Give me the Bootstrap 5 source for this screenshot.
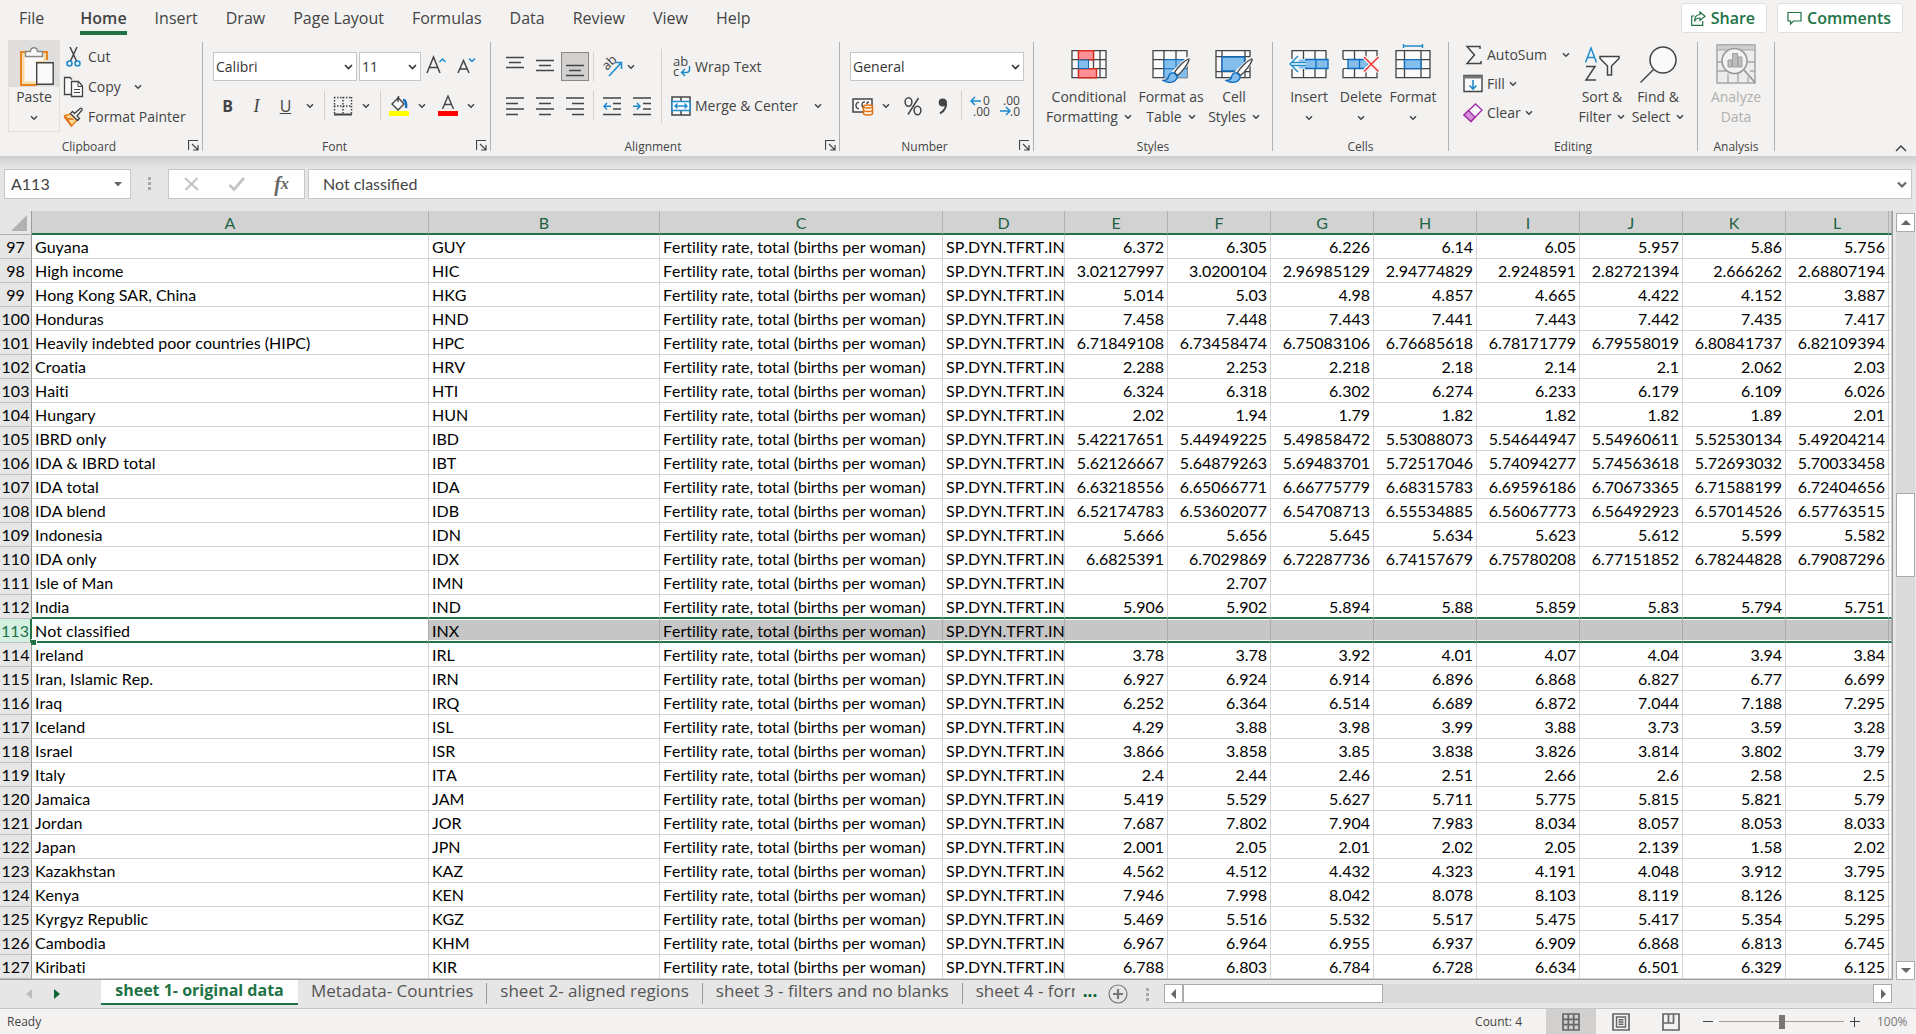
<!DOCTYPE html>
<html lang="en">
<head>
<meta charset="utf-8">
<meta name="viewport" content="width=device-width, initial-scale=1">
<title>Workbook</title>
<link rel="stylesheet" href="https://cdn.jsdelivr.net/npm/bootstrap@5.3.0/dist/css/bootstrap.min.css">
<style>
:root{--ink:#444;--green:#217346;--blue:#1e8bcd;--line:#c6c6c6}
body{font-family:"Open Sans","Noto Sans",sans-serif;font-size:14px;line-height:20px;color:var(--ink);background:#e6e6e6}
svg{display:block;flex:none;fill:none;stroke:var(--ink);overflow:visible}
.btn{--bs-btn-padding-x:0;--bs-btn-padding-y:0;--bs-btn-border-width:0;--bs-btn-border-radius:0;--bs-btn-font-size:14px;--bs-btn-color:#444;--bs-btn-line-height:20px;white-space:nowrap}
.chrome{background:#f3f2f1}
/* ribbon tabs */
.tabstrip{height:36px}
.tabstrip .nav-link{font-size:16px;line-height:24px;padding:6px 0 0;margin:0 14px;color:var(--ink)}
.tabstrip .nav-item:first-child .nav-link{margin:0 22px 0 19px}
.tabstrip .nav-link.active{font-weight:600;border-bottom:4px solid var(--green);padding-bottom:1px}
.corner-btn{height:30px;background:#fff;border:1px solid #e1dfdd;border-radius:3px;color:var(--green);font-weight:600;font-size:16px;gap:5px;padding:0 11px 0 9px}
.corner-btn svg{stroke:var(--green)}
/* ribbon */
.ribbon{height:120px;padding-top:4px}
.rgroup{flex:none;display:flex;flex-direction:column}
.rbody{height:92px;display:flex}
.rfoot{height:24px;padding-top:5px;display:flex;font-size:12px;line-height:19px;text-align:center}
.rfoot .launch{width:24px;padding:3px 0 0 10px}
.rsep{flex:none;width:1px;background:#b1b1b1;margin:2px 0 5px}
.isep{flex:none;width:1px;background:#d2d0ce;height:29px}
.tallsep{flex:none;width:1px;background:#d2d0ce;height:74px;margin:9px 9px 0 4px}
.gclip{width:202px}.gfont{width:287px}.galign{width:348px}.gnum{width:193px}
.gstyle{width:238px}.gcell{width:175px}.gedit{width:248px}.ganal{width:76px}
.rows{display:flex;flex-direction:column;gap:10px;padding-top:12px}
.rows>div{display:flex;height:29px;align-items:center}
.b26,.b29,.b30,.cv{height:29px;display:flex;align-items:center;justify-content:center}
.b26{width:26px}.b29{width:29px}.b30{width:30px}.cv{width:19px}
.glyph{font-size:16px}
.glyph-i{font-family:"Liberation Serif",serif;font-size:18px}
.pressed,.pressed:hover{background:#d2d0ce;border:1px solid #8a8886;margin:0 1px;width:28px}
.lbl{height:30px;display:flex;align-items:center;gap:5px}
.slim{height:29px;gap:4px}
.big{display:flex;flex-direction:column;align-items:center;padding-top:4px;height:92px}
.big .pic{height:43px}
.big .ln{display:flex;gap:6px;align-items:center;height:20px}
.paste{width:52px;height:92px;border:1px solid #e1dfdd;display:flex;flex-direction:column;align-items:center}
.paste .pic{background:#dfdedd;align-self:stretch;height:46px;display:flex;justify-content:center;padding:5px 0 0 6px}
.cmb{height:29px;border:1px solid var(--line);border-radius:0;padding:0 20px 0 2px;font-size:14px;line-height:20px;color:#333;background-position:right 3px center;background-size:9px 6px;background-image:url("data:image/svg+xml,%3csvg xmlns='http://www.w3.org/2000/svg' viewBox='0 0 9 6'%3e%3cpath fill='none' stroke='%23333' stroke-width='1.6' d='M1 1l3.5 3.5L8 1'/%3e%3c/svg%3e")}
.c144{width:144px}.c62{width:62px;margin-left:2px}.c174{width:174px}
/* formula bar */
.fbar{height:55px;padding:13px 4px 0;background:linear-gradient(#cfcfcf,#e6e6e6 12px)}
.fbox{height:30px;background:#fff;border:1px solid var(--line);display:flex;align-items:center}
.fbox input{border:0;outline:0;background:transparent;min-width:0;flex:1;font:16px/22px Lato,sans-serif;color:var(--ink);padding:0}
.nbox{width:127px;padding:0 8px 0 6px}
.fxbox{width:137px}.fxbox .btn{width:45px;display:flex;justify-content:center}
.fxl{font:italic 700 20px/22px "Liberation Serif",serif;color:#666}
.fxl small{font-size:16px}
/* grid */
.gridwrap{min-height:0;padding-right:1px}
.sheet{background:#fff;border-right:1px solid #9b9b9b;border-bottom:1px solid #9b9b9b;min-width:0}
.cells{table-layout:fixed;width:100%;border-collapse:separate;border-spacing:0;font:16px/22px Lato,sans-serif;color:#000;font-variant-ligatures:none;font-kerning:none}
.cells td,.cells th{height:24px;padding:0 3px;border:solid #d4d4d4;border-width:0 1px 1px 0;white-space:nowrap;overflow:hidden;font-weight:400}
.cells thead th,.cells .above td,.cells .picked td{border-bottom:2px solid var(--green);line-height:20px;padding-top:2px}
.cells thead th{background:#d2d2d2;border-right-color:#b1b1b1;color:#1e6345;text-align:center}
.cells thead th:first-child{background:#e6e6e6;border-bottom:1px solid #b1b1b1;border-right-color:#9b9b9b;padding:0}
.cells tbody th{background:#e6e6e6;border-color:#c0c0c0;border-right-color:#9b9b9b;padding:0;text-align:center}
.cells td.num{text-align:right}
.cells .picked td{border-right-color:#ababab;background:linear-gradient(#c6c6c6,#c6c6c6) center/100% calc(100% - 2px) no-repeat}
.cells .picked th{background:#d3f0e0;color:var(--green);border-right:2px solid var(--green)}
.cells .picked td:nth-child(2){background:#fff;position:relative;overflow:visible}
.cells .picked td:nth-child(2)::after{content:"";position:absolute;left:-1px;bottom:-4px;width:6px;height:6px;background:var(--green);border:solid #fff;border-width:1px 1px 0 0}
.vbar{width:19px;margin-left:3px;padding-top:2px;display:flex;flex-direction:column}
.sbtn{width:19px;height:19px;background:#fff;border:1px solid #ababab;display:flex;align-items:center;justify-content:center;flex:none}
.sbtn svg,.tri{fill:#666;stroke:none}
.track{background:#dadada;flex:1;display:flex}
.vthumb{width:19px;height:84px;background:#fff;border:1px solid #ababab}
.hthumb{width:200px;height:19px;background:#fff;border:1px solid #ababab}
/* sheet tabs */
.shtabs{height:29px;border-bottom:1px solid #c6c6c6;padding-right:24px}
.shtabs .nav-link{font-size:17px;line-height:20px;height:25px;color:#555;padding:0;white-space:nowrap}
.shtabs .sheettab{padding:0 13px;border-right:1px solid #9b9b9b;margin-top:3px;height:21px;display:flex;align-items:center}
.shtabs .sheettab .nav-link{line-height:16px;height:21px}
.shtabs .current{width:197px;margin-left:101px;background:#fff;color:var(--green);font-weight:700;font-size:16px;text-align:center;border-bottom:2px solid var(--green)}
.arrows{width:101px;margin-right:-101px;height:28px;gap:22px;padding-left:26px}
.cut-off{width:99px;overflow:hidden}
.more{color:#0e6535;font-size:17px;line-height:16px;height:21px}
.dots3{display:flex;flex-direction:column;gap:2px}
.dots3 i{width:3px;height:3px;background:#a8a8a8}
.hbar{flex:1;display:flex;margin:4px 0 0 15px}
/* status bar */
.status{height:25px;font-size:12px;line-height:25px}
.status .vb{width:50px;height:25px;display:flex;align-items:center;justify-content:center}
.status .on{background:#d2d0ce}
.zoomer{appearance:none;width:125px;height:15px;background:linear-gradient(#a19f9d,#a19f9d) center/100% 1px no-repeat;margin:0 6px}
.zoomer::-webkit-slider-thumb{appearance:none;width:6px;height:14px;background:#797775}
.pct{width:56px;padding-left:17px;color:#777}
</style>
<script src="https://cdn.jsdelivr.net/npm/bootstrap@5.3.0/dist/js/bootstrap.bundle.min.js"></script>
</head>
<body class="d-flex flex-column vh-100 overflow-hidden">
<svg width="0" height="0" class="position-absolute" aria-hidden="true">
  <symbol id="chev" viewBox="0 0 8 6"><path d="M1 1.200l3 3 3-3" stroke-width="1.500"/></symbol>
  <symbol id="launch" viewBox="0 0 11 11"><path d="M.5 10V.5H10M4 4l5.500 5.500M10 5v5H5" stroke-width="1.200"/></symbol>
  <symbol id="brush" viewBox="0 0 28 26"><path d="M26.500 1C22 3 15 10 12.500 14.500l3 3C20 14 26 6 27 2c.2-.9 0-1.200-.5-1z" fill="#fff" stroke-width="1.300"/><path d="M12 15c-3-.5-5 1-5.500 4-.4 2-2 3.500-5.500 3.500 3 2 8 2.500 11 .8 2.500-1.500 3.500-3.500 3-5.300z" fill="#83beec" stroke="#0f6cbd" stroke-width="1.400"/></symbol>
</svg>

<header class="chrome">
  <div class="tabstrip d-flex">
    <ul class="nav flex-nowrap flex-grow-1">
      <li class="nav-item"><a class="nav-link" href="#">File</a></li>
      <li class="nav-item"><a class="nav-link active" href="#">Home</a></li>
      <li class="nav-item"><a class="nav-link" href="#">Insert</a></li>
      <li class="nav-item"><a class="nav-link" href="#">Draw</a></li>
      <li class="nav-item"><a class="nav-link" href="#">Page Layout</a></li>
      <li class="nav-item"><a class="nav-link" href="#">Formulas</a></li>
      <li class="nav-item"><a class="nav-link" href="#">Data</a></li>
      <li class="nav-item"><a class="nav-link" href="#">Review</a></li>
      <li class="nav-item"><a class="nav-link" href="#">View</a></li>
      <li class="nav-item"><a class="nav-link" href="#">Help</a></li>
    </ul>
    <div class="d-flex" style="gap:10px;padding:3px 13px 0 0">
      <button class="btn corner-btn d-flex align-items-center" type="button"><svg width="15" height="15"><path d="M3.500 5H.7v9.300h11V10M9 1l5 4.200-5 4.300V7C6.500 7 4.500 8 3.500 10.500 3.500 6 6 3.700 9 3.500z" stroke-width="1.200"/></svg>Share</button>
      <button class="btn corner-btn d-flex align-items-center" type="button"><svg width="15" height="15"><path d="M1 1.500h13v8.500H6.500L3.500 13v-3H1z" stroke-width="1.200"/></svg>Comments</button>
    </div>
  </div>

  <div class="ribbon d-flex">
    <section class="rgroup gclip">
      <div class="rbody ps-2">
        <button class="btn paste" type="button"><span class="pic"><svg width="36" height="40"><path d="M8 6H2v33h16M22 6h6v8" stroke="#e8831d" stroke-width="2"/><path d="M4.500 8h21v8H18v20.500H4.500z" fill="#fafafa" stroke="#fbdc9c" stroke-width="2"/><path d="M6.500 10.500V5.500h5c0-2.500 1.500-3.800 3.500-3.800s3.500 1.300 3.500 3.800h5v5z" fill="#fafafa" stroke="#888" stroke-width="1.400"/><path d="M17.700 16.700h16.500v21.500H17.700z" fill="#fafafa" stroke-width="1.400"/></svg></span><span class="ln">Paste</span><svg class="mt-2" width="8" height="6"><use href="#chev"/></svg></button>
        <div style="padding:2px 0 0 3px">
          <button class="btn lbl" type="button"><svg width="20" height="22"><path d="M7 1l6.500 14M14 1L7.500 15" stroke-width="1.500"/><circle cx="6.500" cy="17.500" r="2.500" stroke="#1e8bcd" stroke-width="1.600"/><circle cx="14.500" cy="17.500" r="2.500" stroke="#1e8bcd" stroke-width="1.600"/></svg>Cut</button>
          <button class="btn lbl" type="button"><svg width="20" height="22"><path d="M8 18.500H1.500V1.500H7l2 2" fill="#fafafa" stroke-width="1.300"/><path d="M8.500 5.500h7l4 4.500v10.500h-11z" fill="#fafafa" stroke-width="1.300"/><path d="M15 6v4.500h4M11 13.500h6M11 16.500h6" stroke-width="1"/></svg>Copy<svg class="ms-2" width="8" height="6"><use href="#chev"/></svg></button>
          <button class="btn lbl" type="button"><svg width="20" height="22"><path d="M2 9.500l6-1.500 6 6-5.500 6z" fill="#fbdc9c" stroke="#e8831d" stroke-width="1.500"/><path d="M1 10.500l7.500 9.500M4.500 12.500l6 1" stroke="#e07010" stroke-width="1.500"/><path d="M7.500 7.500l7 7 2-2-2.500-2.500 5-6c.8-1-.8-2.500-1.800-1.600L11.500 7.500 9.500 5.500z" fill="#fafafa" stroke-width="1.300"/></svg>Format Painter</button>
        </div>
      </div>
      <div class="rfoot"><span class="flex-grow-1">Clipboard</span><span class="launch"><svg width="11" height="11"><use href="#launch"/></svg></span></div>
    </section>
    <div class="rsep"></div>

    <section class="rgroup gfont">
      <div class="rbody" style="padding-left:10px"><div class="rows">
        <div>
          <select class="form-select cmb c144" aria-label="Font"><option>Calibri</option></select>
          <select class="form-select cmb c62" aria-label="Font size"><option>11</option></select>
          <button class="btn b30" type="button" aria-label="Increase font size"><svg width="20" height="20"><path d="M1 16L7.500 0 14 16M3.500 10.500h8" stroke-width="1.500"/><path d="M13.500 5L16.500 2l3 3" stroke="#1e8bcd" stroke-width="1.500"/></svg></button>
          <button class="btn b30" type="button" aria-label="Decrease font size"><svg width="20" height="20"><path d="M2 16L7.500 3.500 13 16M4 12h7" stroke-width="1.500"/><path d="M13 1.500l3 3 3-3" stroke="#1e8bcd" stroke-width="1.500"/></svg></button>
        </div>
        <div>
          <button class="btn b29 glyph fw-bold" type="button">B</button>
          <button class="btn b29 glyph-i fst-italic" type="button">I</button>
          <button class="btn b29 glyph text-decoration-underline" type="button">U</button>
          <button class="btn cv" type="button" aria-label="Underline styles"><svg width="8" height="6"><use href="#chev"/></svg></button>
          <div class="isep" style="margin:0 5px"></div>
          <button class="btn b26" type="button" aria-label="Borders"><svg width="20" height="20"><path d="M1 1.500h18M1 10h18M1.500 1v17M10 1v17M18.500 1v17" stroke-width="1.500" stroke-dasharray="1.500 1.500"/><path d="M1 18.500h18" stroke-width="2"/></svg></button>
          <button class="btn cv" type="button" aria-label="Border styles"><svg width="8" height="6"><use href="#chev"/></svg></button>
          <div class="isep" style="margin:0 5px"></div>
          <button class="btn b26" type="button" aria-label="Fill colour"><svg width="20" height="21"><path d="M9 2.500l6 6.500-6 6-6-6 6.500-6.500V1M9 2v5" fill="#fafafa" stroke-width="1.400"/><path d="M14 5c3 0 3.500 4 3 8" stroke="#0f6cbd" stroke-width="2.400"/><path d="M0 16h20v5H0z" fill="#ff0" stroke="none"/></svg></button>
          <button class="btn cv" type="button" aria-label="Fill colours"><svg width="8" height="6"><use href="#chev"/></svg></button>
          <button class="btn b26 ms-1" type="button" aria-label="Font colour"><svg width="20" height="21"><path d="M4.500 14L10 1l5.500 13M6.500 9.500h7" stroke-width="1.400"/><path d="M0 16h20v5H0z" fill="red" stroke="none"/></svg></button>
          <button class="btn cv" type="button" aria-label="Font colours"><svg width="8" height="6"><use href="#chev"/></svg></button>
        </div>
      </div></div>
      <div class="rfoot"><span class="flex-grow-1">Font</span><span class="launch"><svg width="11" height="11"><use href="#launch"/></svg></span></div>
    </section>
    <div class="rsep"></div>

    <section class="rgroup galign">
      <div class="rbody" style="padding-left:9px">
        <div class="rows">
          <div>
            <button class="btn b30" type="button" aria-label="Top align"><svg width="18" height="22"><path d="M0 1.500h18M3 6.500h12M0 11.500h18" stroke-width="1.500"/></svg></button>
            <button class="btn b30" type="button" aria-label="Middle align"><svg width="18" height="22"><path d="M0 4.500h18M3 9.500h12M0 14.500h18" stroke-width="1.500"/></svg></button>
            <button class="btn b30 pressed" type="button" aria-label="Bottom align"><svg width="18" height="22"><path d="M0 9.500h18M3 14.500h12M0 19.500h18" stroke-width="1.500"/></svg></button>
            <div class="isep" style="margin:0 3px"></div>
            <button class="btn d-flex align-items-center" type="button" aria-label="Orientation" style="gap:5px;padding-left:5px"><svg width="20" height="21"><text transform="translate(5 15) rotate(-45)" font-size="13" fill="#444" stroke="none">ab</text><path d="M7 20L19 7M13 6.500h6.500V13" stroke="#1e8bcd" stroke-width="1.600"/></svg><svg width="8" height="6"><use href="#chev"/></svg></button>
          </div>
          <div>
            <button class="btn b30" type="button" aria-label="Align left"><svg width="18" height="20"><path d="M0 2h18M0 7.500h12M0 13h18M0 18.500h12" stroke-width="1.500"/></svg></button>
            <button class="btn b30" type="button" aria-label="Centre"><svg width="18" height="20"><path d="M0 2h18M3 7.500h12M0 13h18M3 18.500h12" stroke-width="1.500"/></svg></button>
            <button class="btn b30" type="button" aria-label="Align right"><svg width="18" height="20"><path d="M0 2h18M6 7.500h12M0 13h18M6 18.500h12" stroke-width="1.500"/></svg></button>
            <div class="isep" style="margin:0 3px"></div>
            <button class="btn b30" type="button" aria-label="Decrease indent"><svg width="18" height="20"><path d="M0 2h18M10 7.500h8M10 13h8M0 18.500h18" stroke-width="1.500"/><path d="M8 10.300H1M4 7l-3 3.300 3 3.300" stroke="#1e8bcd" stroke-width="1.500"/></svg></button>
            <button class="btn b30" type="button" aria-label="Increase indent"><svg width="18" height="20"><path d="M0 2h18M10 7.500h8M10 13h8M0 18.500h18" stroke-width="1.500"/><path d="M0 10.300h7M4 7l3 3.300-3 3.300" stroke="#1e8bcd" stroke-width="1.500"/></svg></button>
          </div>
        </div>
        <div class="tallsep"></div>
        <div class="rows">
          <div><button class="btn lbl slim" type="button"><svg width="20" height="22"><text x="2" y="10" font-size="13" fill="#444" stroke="none">ab</text><text x="2" y="20" font-size="13" fill="#444" stroke="none">c</text><path d="M18.500 10v3.500c0 2-1 3-3 3H11M14 13l-3.500 3.500L14 20" stroke="#1e8bcd" stroke-width="1.500"/></svg>Wrap Text</button></div>
          <div><button class="btn lbl slim" type="button"><svg width="20" height="20"><path d="M1 1h18v18H1zM10 1v4M10 15v4" fill="#fafafa" stroke-width="1.500"/><path d="M1 5.500h18v9H1z" fill="#fff" stroke="#1e8bcd" stroke-width="1.500"/><path d="M4 10h12M6.500 7.500L4 10l2.500 2.500M13.500 7.500L16 10l-2.500 2.500" stroke="#1e8bcd" stroke-width="1.400"/></svg>Merge &amp; Center<svg style="margin-left:12px" width="8" height="6"><use href="#chev"/></svg></button></div>
        </div>
      </div>
      <div class="rfoot"><span class="flex-grow-1">Alignment</span><span class="launch"><svg width="11" height="11"><use href="#launch"/></svg></span></div>
    </section>
    <div class="rsep"></div>

    <section class="rgroup gnum">
      <div class="rbody" style="padding-left:10px"><div class="rows">
        <div><select class="form-select cmb c174" aria-label="Number format"><option>General</option></select></div>
        <div>
          <button class="btn b26" type="button" aria-label="Currency"><svg width="22" height="21"><path d="M1 4h19v13H1z" fill="#fafafa" stroke-width="1.500"/><path d="M7 7.500c-4-1-4 7 0 6M13 7c-4-1-4 7 0 6M17 7c-2 0-2 1-2 2" stroke-width="1.400"/><path d="M11.500 11.500v7c0 2 9 2 9 0v-7c0-2-9-2-9 0z" fill="#fff3e0" stroke="#e07010" stroke-width="1.500"/><path d="M11.500 11.500c0 2 9 2 9 0M11.500 15c0 2 9 2 9 0" stroke="#e07010" stroke-width="1.300"/></svg></button>
          <button class="btn cv" type="button" aria-label="Currencies"><svg width="8" height="6"><use href="#chev"/></svg></button>
          <button class="btn b30" type="button" aria-label="Percent" style="margin-left:3px"><svg width="18" height="20"><path d="M14.500 2L4 18.500" stroke-width="1.500"/><ellipse cx="4.500" cy="6" rx="3.400" ry="4.200" stroke-width="1.500"/><ellipse cx="13.500" cy="14.500" rx="3.400" ry="4.200" stroke-width="1.500"/></svg></button>
          <button class="btn b30" type="button" aria-label="Comma"><svg width="10" height="20"><circle cx="4.700" cy="6.500" r="4" fill="#444" stroke="none"/><path d="M7.500 5c1.500 5 0 9-5.500 12.500" stroke-width="2"/></svg></button>
          <div class="isep" style="margin:0 3px"></div>
          <button class="btn b30" type="button" aria-label="Increase decimal"><svg width="20" height="22"><text x="13" y="10" font-size="12" fill="#444" stroke="none">0</text><text x="3" y="21" font-size="12" fill="#444" stroke="none">.00</text><path d="M11 6H1M5 2L1 6l4 4" stroke="#1e8bcd" stroke-width="1.500"/></svg></button>
          <button class="btn b30" type="button" aria-label="Decrease decimal"><svg width="20" height="22"><text x="3" y="10" font-size="12" fill="#444" stroke="none">.00</text><text x="10" y="21" font-size="12" fill="#444" stroke="none">.0</text><path d="M0 16h10M6 12l4 4-4 4" stroke="#1e8bcd" stroke-width="1.500"/></svg></button>
        </div>
      </div></div>
      <div class="rfoot"><span class="flex-grow-1">Number</span><span class="launch"><svg width="11" height="11"><use href="#launch"/></svg></span></div>
    </section>
    <div class="rsep"></div>

    <section class="rgroup gstyle">
      <div class="rbody" style="padding-left:10px">
        <button class="btn big" type="button" style="width:90px"><span class="pic"><svg width="36" height="40"><path d="M1 6.700h34v27H1zM1 15.700h34M1 24.700h34M7.500 7v27M16 7v27M22.500 7v27M29 7v27" fill="#fafafa" stroke-width="1.300"/><path d="M7.500 6.700h15v9h-15zM7.500 24.700h18v9h-18z" fill="#ff9196" stroke="#d92c20" stroke-width="1.400"/><path d="M7.500 16h10v8.500h-10z" fill="#83beec" stroke="#0f6cbd"/></svg></span><span class="ln">Conditional</span><span class="ln">Formatting<svg width="8" height="6"><use href="#chev"/></svg></span></button>
        <button class="btn big" type="button" style="width:74px"><span class="pic"><svg width="38" height="42"><path d="M1 6.700h34v27H1zM1 15.700h34M1 24.700h34M12 7v27M24 7v27" fill="#fafafa" stroke-width="1.300"/><path d="M12 15.700h23v18H12z" fill="#83beec" stroke="none"/><path d="M12 33V15.700h20M24 16v9M12 24.700h23" stroke="#0f6cbd"/><path d="M38 15L22 30" stroke="#f3f2f1" stroke-width="7"/><use href="#brush" x="10" y="14" width="28" height="26"/></svg></span><span class="ln">Format as</span><span class="ln">Table<svg width="8" height="6"><use href="#chev"/></svg></span></button>
        <button class="btn big" type="button" style="width:52px"><span class="pic"><svg width="38" height="42"><path d="M1 6.700h34v27H1zM1 12.700h34M1 27.700h34M7 7v27M30 7v27" fill="#fafafa" stroke-width="1.300"/><path d="M7 13h22.500v14H7z" fill="#83beec" stroke="#0f6cbd" stroke-width="1.300"/><path d="M38 15L22 30" stroke="#f3f2f1" stroke-width="7"/><use href="#brush" x="10" y="14" width="28" height="26"/></svg></span><span class="ln">Cell</span><span class="ln">Styles<svg width="8" height="6"><use href="#chev"/></svg></span></button>
      </div>
      <div class="rfoot"><span class="flex-grow-1">Styles</span></div>
    </section>
    <div class="rsep"></div>

    <section class="rgroup gcell">
      <div class="rbody" style="padding-left:10px">
        <button class="btn big" type="button" style="width:52px"><span class="pic"><svg width="40" height="40"><path d="M3 6.700h34v27H3zM14.500 7v27M26 7v27" fill="#fafafa" stroke-width="1.300"/><path d="M0 15h20v10H0z" fill="#fafafa" stroke="none"/><path d="M10 15.500h29v9H10z" fill="#83beec" stroke="none"/><path d="M16 15.500h23v9H16M27 15.500v9" stroke="#0f6cbd" stroke-width="1.300"/><path d="M17 20H2" stroke="#fafafa" stroke-width="5"/><path d="M9 12l-8 8 8 8M3 18.500h14M3 21.500h14" stroke="#1e8bcd" stroke-width="1.400"/></svg></span><span class="ln">Insert</span><svg class="mt-2" width="8" height="6"><use href="#chev"/></svg></button>
        <button class="btn big" type="button" style="width:52px"><span class="pic"><svg width="38" height="40"><path d="M1 6.700h34v27H1zM12.500 7v27M24 7v27" fill="#fafafa" stroke-width="1.300"/><path d="M0 15h37v10H0z" fill="#fafafa" stroke="none"/><path d="M1 15.500h5M1 24.500h5"/><path d="M6 15.500h20v9H6zM17.500 15.500v9" fill="#83beec" stroke="#0f6cbd" stroke-width="1.300"/><path d="M22 13l14.500 14.500M36.500 13L22 27.500" stroke="#f3f2f1" stroke-width="4"/><path d="M22 13l14.500 14.500M36.500 13L22 27.500" stroke="#f0403c" stroke-width="1.600"/></svg></span><span class="ln">Delete</span><svg class="mt-2" width="8" height="6"><use href="#chev"/></svg></button>
        <button class="btn big" type="button" style="width:52px"><span class="pic"><svg width="36" height="40"><path d="M1 6.700h34v27H1zM1 15.700h34M1 24.700h34M9.500 7v27M26 7v27" fill="#fafafa" stroke-width="1.300"/><path d="M9.500 15.700H26v9H9.500z" fill="#83beec" stroke="#0f6cbd" stroke-width="1.300"/><path d="M8.500 0v4M27.500 0v4M8.500 2h19" stroke="#1e8bcd" stroke-width="1.400"/></svg></span><span class="ln">Format</span><svg class="mt-2" width="8" height="6"><use href="#chev"/></svg></button>
      </div>
      <div class="rfoot"><span class="flex-grow-1">Cells</span></div>
    </section>
    <div class="rsep"></div>

    <section class="rgroup gedit">
      <div class="rbody" style="padding-left:14px">
        <div style="width:110px">
          <button class="btn lbl slim" type="button"><svg width="20" height="20"><path d="M17 4V1.500H4l7.500 8.500L4 18.500h14V16" stroke-width="1.500"/></svg>AutoSum<svg style="margin-left:11px" width="8" height="6"><use href="#chev"/></svg></button>
          <button class="btn lbl slim" type="button"><svg width="20" height="20"><path d="M1 1.500h18v16H1z" fill="#fafafa" stroke-width="1.400"/><path d="M1 3h18" stroke="#777" stroke-width="3"/><path d="M10 6v9M6.500 11.500L10 15l3.500-3.500" stroke="#1e8bcd" stroke-width="1.600"/></svg>Fill<svg width="8" height="6"><use href="#chev"/></svg></button>
          <button class="btn lbl slim" type="button"><svg width="20" height="20"><path d="M1 12L12.500 1l6.500 6L8 18.500z" fill="#fafafa" stroke="#a02da5" stroke-width="1.300"/><path d="M1 12l4.500-4.500L12 14l-4 4.500z" fill="#d690d9" stroke="#a02da5" stroke-width="1.300"/></svg>Clear<svg width="8" height="6"><use href="#chev"/></svg></button>
        </div>
        <button class="btn big" type="button" style="width:58px"><span class="pic"><svg width="36" height="40"><path d="M1.500 18.500L7 4l5.500 14.500M3.500 13.500h7" stroke="#1e8bcd" stroke-width="1.500"/><path d="M2 22.500h9L2 36h10" stroke-width="1.500"/><path d="M16 12.500h19v2L27.500 22v9h-4v-9L16 14.500z" fill="#fafafa" stroke-width="1.500"/></svg></span><span class="ln">Sort &amp;</span><span class="ln">Filter<svg width="8" height="6"><use href="#chev"/></svg></span></button>
        <button class="btn big" type="button" style="width:54px"><span class="pic"><svg width="38" height="40"><circle cx="24" cy="16" r="13" fill="#fafafa" stroke-width="1.500"/><path d="M14.500 25.500L1.500 38.500" stroke-width="1.500"/></svg></span><span class="ln">Find &amp;</span><span class="ln">Select<svg width="8" height="6"><use href="#chev"/></svg></span></button>
      </div>
      <div class="rfoot"><span class="flex-grow-1">Editing</span></div>
    </section>
    <div class="rsep"></div>

    <section class="rgroup ganal">
      <div class="rbody">
        <button class="btn big" type="button" style="width:76px;color:#b1afad"><span class="pic"><svg width="40" height="40" style="stroke:#a6a6a6"><path d="M1 1h38v38H1z" fill="#ececec" stroke-width="1.500"/><path d="M1 1h38v5H1z" fill="#d0d0d0"/><path d="M1 18h6M1 27h9M31 18h8M34 27h5M12 30v9M22 30v9M32 33v6" stroke-width="1.300"/><circle cx="18.500" cy="17" r="12.500" fill="#f3f2f1" stroke="#999" stroke-width="1.600"/><path d="M28 26l11 12.500" stroke="#999" stroke-width="1.800"/><path d="M12 16h4v7h-4zM16.500 9.500h5V23h-5zM22 13h4v10h-4z" fill="#bdbdbd" stroke="#a0a0a0"/></svg></span><span class="ln">Analyze</span><span class="ln">Data</span></button>
      </div>
      <div class="rfoot"><span class="flex-grow-1">Analysis</span></div>
    </section>
    <div class="rsep"></div>
    <button class="btn ms-auto align-self-end" type="button" aria-label="Collapse the ribbon" style="padding:0 9px 4px 0"><svg width="12" height="8"><path d="M1 7l5-5 5 5" stroke-width="1.500"/></svg></button>
  </div>
</header>

<div class="fbar d-flex">
  <div class="fbox nbox"><input aria-label="Name box" value="A113"><svg class="tri" width="8" height="5"><path d="M0 0h8L4 4.500z"/></svg></div>
  <div class="dots3 justify-content-center" style="height:28px;margin:0 17px 0 17px"><i></i><i></i><i></i></div>
  <div class="fbox fxbox">
    <button class="btn" type="button" aria-label="Cancel"><svg width="16" height="14"><path d="M1 1l13 12M13.500 1l-12 12" stroke="#c4c4c4" stroke-width="2.200"/></svg></button>
    <button class="btn" type="button" aria-label="Enter"><svg width="17" height="14"><path d="M1.500 8l4.500 4.500L16 1" stroke="#c4c4c4" stroke-width="2.800"/></svg></button>
    <button class="btn fxl" type="button">f<small>x</small></button>
  </div>
  <div class="fbox flex-grow-1" style="margin-left:3px;padding:0 4px 0 14px"><input aria-label="Formula bar" value="Not classified"><svg width="10" height="7"><path d="M1 1.500l4 4 4-4" stroke="#666" stroke-width="2.200"/></svg></div>
</div>

<main class="gridwrap d-flex flex-grow-1">
  <div class="sheet flex-grow-1 overflow-hidden">
    <table class="cells">
      <colgroup><col style="width:32px"><col style="width:397px"><col style="width:231px"><col style="width:283px"><col style="width:122px"><col style="width:103px"><col style="width:103px"><col style="width:103px"><col style="width:103px"><col style="width:103px"><col style="width:103px"><col style="width:103px"><col style="width:103px"><col></colgroup>
      <thead><tr><th><svg class="ms-auto" width="20" height="18" style="fill:#b1b1b1;stroke:none"><path d="M16 1v16H0z"/></svg></th><th>A</th><th>B</th><th>C</th><th>D</th><th>E</th><th>F</th><th>G</th><th>H</th><th>I</th><th>J</th><th>K</th><th>L</th><th></th></tr></thead>
      <tbody id="rows"></tbody>
    </table>
  </div>
  <div class="vbar">
    <button class="btn sbtn" type="button" aria-label="Scroll up"><svg width="10" height="6"><path d="M5 0l5 5H0z"/></svg></button>
    <div class="track flex-column"><div style="flex:261 0 0"></div><div class="vthumb"></div><div style="flex:385 0 0"></div></div>
    <button class="btn sbtn" type="button" aria-label="Scroll down"><svg width="10" height="6"><path d="M0 0h10L5 5z"/></svg></button>
  </div>
</main>

<nav class="shtabs d-flex">
  <div class="arrows d-flex align-items-center"><svg width="6" height="10" style="fill:#bdbdbd;stroke:none"><path d="M6 0v10L0 5z"/></svg><svg width="6" height="10" style="fill:#0e6535;stroke:none"><path d="M0 0v10l6-5z"/></svg></div>
  <a class="nav-link current" href="#">sheet 1- original data</a>
  <div class="sheettab"><a class="nav-link" href="#">Metadata- Countries</a></div>
  <div class="sheettab"><a class="nav-link" href="#">sheet 2- aligned regions</a></div>
  <div class="sheettab"><a class="nav-link" href="#">sheet 3 - filters and no blanks</a></div>
  <div class="sheettab border-0 pe-0"><a class="nav-link cut-off" href="#">sheet 4 - form</a><b class="more ms-2">...</b></div>
  <button class="btn" type="button" aria-label="New sheet" style="margin-left:11px"><svg width="20" height="20" style="stroke:#777"><circle cx="10" cy="10" r="9" stroke-width="1.200"/><path d="M10 5v10M5 10h10" stroke-width="2.200"/></svg></button>
  <div class="dots3 justify-content-center" style="margin-left:18px"><i></i><i></i><i></i></div>
  <div class="hbar">
    <button class="btn sbtn" type="button" aria-label="Scroll left"><svg width="6" height="10"><path d="M5 0v10L0 5z"/></svg></button>
    <div class="track" style="height:19px"><div class="hthumb"></div></div>
    <button class="btn sbtn" type="button" aria-label="Scroll right"><svg width="6" height="10"><path d="M1 0v10l5-5z"/></svg></button>
  </div>
</nav>

<footer class="status chrome d-flex align-items-center">
  <span class="flex-grow-1" style="padding-left:7px">Ready</span>
  <span style="margin-right:24px">Count: 4</span>
  <button class="btn vb on" type="button" aria-label="Normal view"><svg width="18" height="18" style="stroke:#666"><path d="M1 1h16v16H1zM6.300 1v16M11.700 1v16M1 6.300h16M1 11.700h16" stroke-width="1.700"/></svg></button>
  <button class="btn vb" type="button" aria-label="Page layout view"><svg width="18" height="18" style="stroke:#666"><path d="M1 1h16v16H1z" stroke-width="1.700"/><path d="M4.500 4h9v10h-9zM6.500 6.700h5M6.500 9h5M6.500 11.300h5" stroke-width="1.400"/></svg></button>
  <button class="btn vb" type="button" aria-label="Page break view"><svg width="18" height="18" style="stroke:#666"><path d="M1 1h16v16H1zM1 10h10.500V1M6.500 1v9" stroke-width="1.700"/></svg></button>
  <button class="btn" type="button" aria-label="Zoom out" style="margin-left:7px"><svg width="10" height="10"><path d="M0 4.500h10"/></svg></button>
  <input class="zoomer" type="range" aria-label="Zoom" min="0" max="100" value="50">
  <button class="btn" type="button" aria-label="Zoom in"><svg width="10" height="10"><path d="M0 4.500h10M4.500 0v10"/></svg></button>
  <span class="pct">100%</span>
</footer>

<script>
// name | code | yearly fertility rates, columns E to L
const data = `Guyana|GUY|6.372 6.305 6.226 6.14 6.05 5.957 5.86 5.756
High income|HIC|3.02127997 3.0200104 2.96985129 2.94774829 2.9248591 2.82721394 2.666262 2.68807194
Hong Kong SAR, China|HKG|5.014 5.03 4.98 4.857 4.665 4.422 4.152 3.887
Honduras|HND|7.458 7.448 7.443 7.441 7.443 7.442 7.435 7.417
Heavily indebted poor countries (HIPC)|HPC|6.71849108 6.73458474 6.75083106 6.76685618 6.78171779 6.79558019 6.80841737 6.82109394
Croatia|HRV|2.288 2.253 2.218 2.18 2.14 2.1 2.062 2.03
Haiti|HTI|6.324 6.318 6.302 6.274 6.233 6.179 6.109 6.026
Hungary|HUN|2.02 1.94 1.79 1.82 1.82 1.82 1.89 2.01
IBRD only|IBD|5.42217651 5.44949225 5.49858472 5.53088073 5.54644947 5.54960611 5.52530134 5.49204214
IDA & IBRD total|IBT|5.62126667 5.64879263 5.69483701 5.72517046 5.74094277 5.74563618 5.72693032 5.70033458
IDA total|IDA|6.63218556 6.65066771 6.66775779 6.68315783 6.69596186 6.70673365 6.71588199 6.72404656
IDA blend|IDB|6.52174783 6.53602077 6.54708713 6.55534885 6.56067773 6.56492923 6.57014526 6.57763515
Indonesia|IDN|5.666 5.656 5.645 5.634 5.623 5.612 5.599 5.582
IDA only|IDX|6.6825391 6.7029869 6.72287736 6.74157679 6.75780208 6.77151852 6.78244828 6.79087296
Isle of Man|IMN|- 2.707 - - - - - -
India|IND|5.906 5.902 5.894 5.88 5.859 5.83 5.794 5.751
Not classified|INX|- - - - - - - -
Ireland|IRL|3.78 3.78 3.92 4.01 4.07 4.04 3.94 3.84
Iran, Islamic Rep.|IRN|6.927 6.924 6.914 6.896 6.868 6.827 6.77 6.699
Iraq|IRQ|6.252 6.364 6.514 6.689 6.872 7.044 7.188 7.295
Iceland|ISL|4.29 3.88 3.98 3.99 3.88 3.73 3.59 3.28
Israel|ISR|3.866 3.858 3.85 3.838 3.826 3.814 3.802 3.79
Italy|ITA|2.4 2.44 2.46 2.51 2.66 2.6 2.58 2.5
Jamaica|JAM|5.419 5.529 5.627 5.711 5.775 5.815 5.821 5.79
Jordan|JOR|7.687 7.802 7.904 7.983 8.034 8.057 8.053 8.033
Japan|JPN|2.001 2.05 2.01 2.02 2.05 2.139 1.58 2.02
Kazakhstan|KAZ|4.562 4.512 4.432 4.323 4.191 4.048 3.912 3.795
Kenya|KEN|7.946 7.998 8.042 8.078 8.103 8.119 8.126 8.125
Kyrgyz Republic|KGZ|5.469 5.516 5.532 5.517 5.475 5.417 5.354 5.295
Cambodia|KHM|6.967 6.964 6.955 6.937 6.909 6.868 6.813 6.745
Kiribati|KIR|6.788 6.803 6.784 6.728 6.634 6.501 6.329 6.125`;
const body = document.getElementById('rows');
data.split('\n').forEach((line, i) => {
  const [name, code, rates] = line.split('|');
  const tr = body.insertRow();
  const n = 97 + i;
  if (n === 112) tr.className = 'above';
  if (n === 113) tr.className = 'picked';
  const th = document.createElement('th');
  th.textContent = n;
  tr.append(th);
  [name, code, 'Fertility rate, total (births per woman)', 'SP.DYN.TFRT.IN'].forEach(t => tr.insertCell().textContent = t);
  rates.split(' ').forEach(v => {
    const td = tr.insertCell();
    td.className = 'num';
    td.textContent = v === '-' ? '' : v;
  });
  tr.insertCell();
});
</script>
</body>
</html>
